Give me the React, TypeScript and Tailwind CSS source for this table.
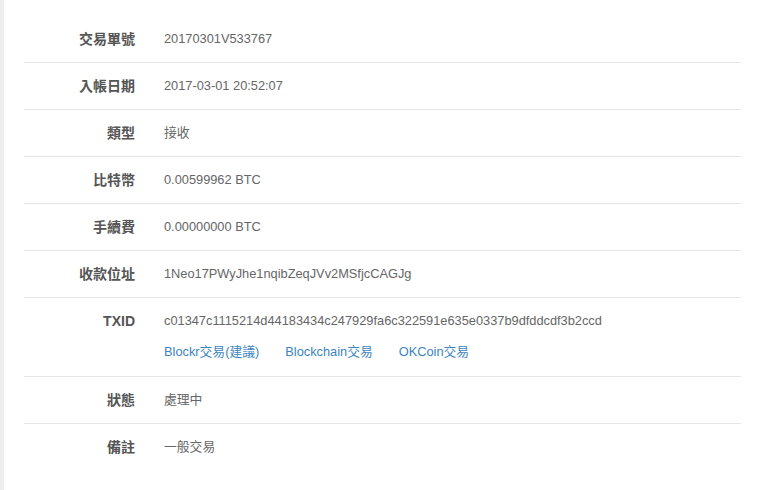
import React from "react";

const rows: { label: string; value: string }[] = [
  { label: "交易單號", value: "20170301V533767" },
  { label: "入帳日期", value: "2017-03-01 20:52:07" },
  { label: "類型", value: "接收" },
  { label: "比特幣", value: "0.00599962 BTC" },
  { label: "手續費", value: "0.00000000 BTC" },
  { label: "收款位址", value: "1Neo17PWyJhe1nqibZeqJVv2MSfjcCAGJg" },
];

const font = { fontFamily: '"Liberation Sans", Arial, "Noto Sans CJK TC", sans-serif' };

function Row({
  label,
  children,
  last,
  extraBottom,
}: {
  label: string;
  children: React.ReactNode;
  last?: boolean;
  extraBottom?: boolean;
}) {
  return (
    <div
      className={`flex pt-[14px] ${extraBottom ? "pb-[15px]" : "pb-[14px]"} ${
        last ? "" : "border-b border-[#e6e6e6]"
      }`}
    >
      <div className="w-[111px] shrink-0 text-right text-[14px] leading-[18px] font-bold text-[#555]">{label}</div>
      <div className="pl-[29px] text-[12.8px] leading-[18px] text-[#666]">{children}</div>
    </div>
  );
}

export default function App() {
  return (
    <div className="flex w-[761px] h-[490px] bg-white" style={font}>
      <div className="w-[4px] shrink-0 bg-[#eeeeee]" />
      <div className="flex-1 pl-[20px] pr-[20px] pt-[16px]">
        {rows.map((r) => (
          <Row key={r.label} label={r.label}>
            {r.value}
          </Row>
        ))}
        <Row label="TXID" extraBottom>
          <div>c01347c1115214d44183434c247929fa6c322591e635e0337b9dfddcdf3b2ccd</div>
          <div className="mt-[13px] flex text-[#3d85c0]">
            <span className="mr-[26px]">Blockr交易(建議)</span>
            <span className="mr-[26px]">Blockchain交易</span>
            <span>OKCoin交易</span>
          </div>
        </Row>
        <Row label="狀態">處理中</Row>
        <Row label="備註" last>
          一般交易
        </Row>
      </div>
    </div>
  );
}
